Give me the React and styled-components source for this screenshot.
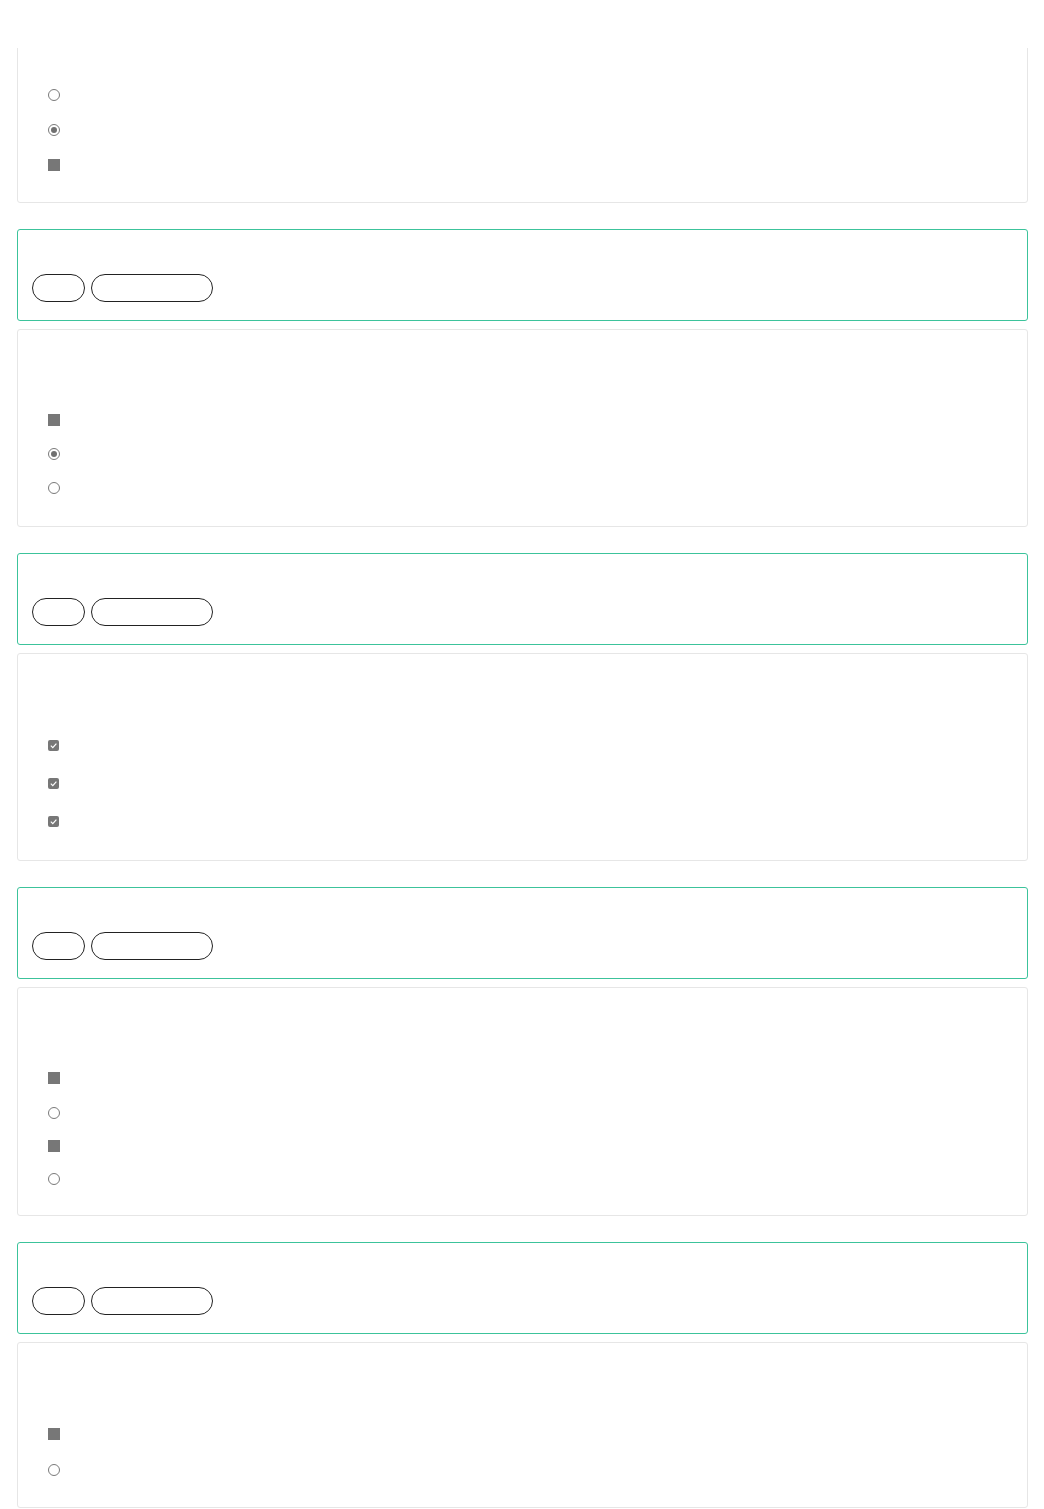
import React from 'react';
import styled, { createGlobalStyle } from 'styled-components';

const GlobalStyle = createGlobalStyle`
  body {
    margin: 0;
    background: #fff;
    font-family: 'Open Sans', 'Liberation Sans', sans-serif;
  }
`;

const TopBar = styled.div`
  position: fixed;
  top: 0;
  left: 0;
  right: 0;
  height: 48px;
  background: #fff;
  z-index: 10;
`;

const Page = styled.div`
  padding: 3px 16px 0 17px;
  display: flex;
  flex-direction: column;
`;

const Group = styled.section`
  display: flex;
  flex-direction: column;
  gap: 8px;
  margin-bottom: 26px;
`;

const AnswerCard = styled.div`
  border: 1px solid #3cc39b;
  border-radius: 3px;
  padding: 14px 14px 18px;
  background: #fff;
`;

const AnswerTitle = styled.div`
  height: 30px;
  color: #fff;
  font-size: 14px;
`;

const PillRow = styled.div`
  display: flex;
  gap: 6px;
`;

const Pill = styled.button`
  width: ${p => p.w}px;
  height: 28px;
  border: 1px solid #222;
  border-radius: 14px;
  background: #fff;
  padding: 0;
`;

const QuestionCard = styled.div`
  border: 1px solid #e6e6e6;
  border-radius: 3px;
  padding: 0 30px 20px;
  background: #fff;
`;

const QuestionTitle = styled.div`
  height: 73px;
  color: #fff;
  font-size: 14px;
`;

const OptionList = styled.ul`
  list-style: none;
  margin: 0;
  padding: 0;
`;

const Option = styled.li`
  height: ${p => p.h}px;
  display: flex;
  align-items: center;
`;

const Radio = styled.span`
  width: 12px;
  height: 12px;
  box-sizing: border-box;
  border-radius: 50%;
  border: 1px solid #7a7a7a;
  display: flex;
  align-items: center;
  justify-content: center;

  &::after {
    content: '';
    width: 6px;
    height: 6px;
    border-radius: 50%;
    background: ${p => (p.checked ? '#707070' : 'transparent')};
  }
`;

const Square = styled.span`
  width: 12px;
  height: 12px;
  background: #777;
`;

const Check = styled.span`
  width: 11px;
  height: 11px;
  border-radius: 2px;
  background: #777;
  display: flex;
  align-items: center;
  justify-content: center;
`;

const CheckMark = () => (
  <svg width="9" height="9" viewBox="0 0 10 10">
    <path d="M2 5.2 L4.2 7.3 L8.2 2.8" fill="none" stroke="#fff" strokeWidth="1.3" />
  </svg>
);

const renderMark = kind => {
  if (kind === 'radio') return <Radio />;
  if (kind === 'radioOn') return <Radio checked />;
  if (kind === 'check') return (
    <Check>
      <CheckMark />
    </Check>
  );
  return <Square />;
};

const questions = [
  { options: ['radio', 'radioOn', 'square'], heights: [35, 35, 35] },
  { options: ['square', 'radioOn', 'radio'], heights: [34.2, 34.2, 34.2] },
  { options: ['check', 'check', 'check'], heights: [37.8, 37.8, 37.8] },
  { options: ['square', 'radio', 'square', 'radio'], heights: [35, 33.5, 33, 33] },
  { options: ['square', 'radio'], heights: [35.5, 35.5] }
];

const Question = ({ q }) => (
  <QuestionCard>
    <QuestionTitle />
    <OptionList>
      {q.options.map((kind, i) => (
        <Option key={i} h={q.heights[i]}>
          {renderMark(kind)}
        </Option>
      ))}
    </OptionList>
  </QuestionCard>
);

const Answer = () => (
  <AnswerCard>
    <AnswerTitle />
    <PillRow>
      <Pill w={53} />
      <Pill w={122} />
    </PillRow>
  </AnswerCard>
);

const App = () => (
  <>
    <GlobalStyle />
    <TopBar />
    <Page>
      <Group>
        <Question q={questions[0]} />
      </Group>
      {questions.slice(1).map((q, i) => (
        <Group key={i}>
          <Answer />
          <Question q={q} />
        </Group>
      ))}
    </Page>
  </>
);

export default App;
